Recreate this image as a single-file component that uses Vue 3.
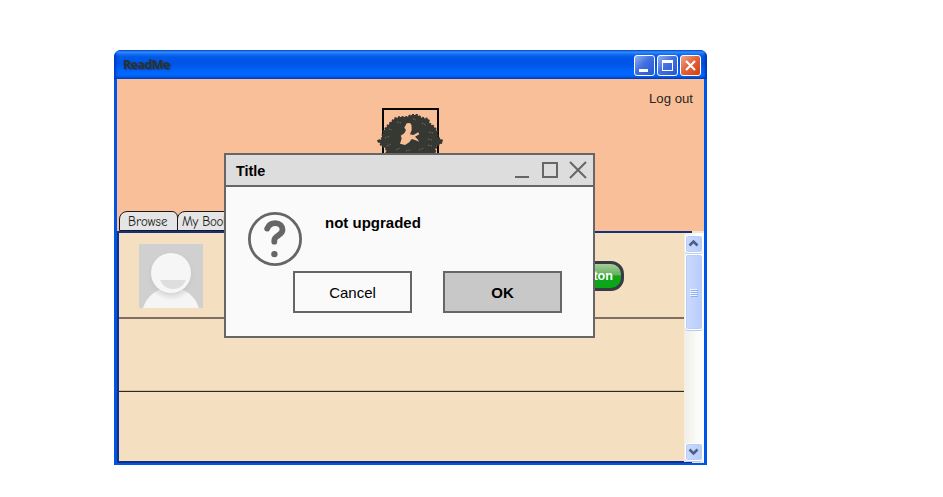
<script setup>
const captions = ['min', 'max', 'close']
const tabs = ['Browse', 'My Books']
</script>

<template>
  <main class="stage">
    <section class="window">
      <header class="titlebar">
        <h1>ReadMe</h1>
        <div class="captions">
          <button v-for="c in captions" :key="c" :class="['cap', c]">
            <svg viewBox="0 0 21 21" width="21" height="21">
              <rect v-if="c === 'min'" x="5" y="14" width="9" height="3" fill="#fff" />
              <path v-else-if="c === 'max'" d="M5 5h11v11H5zM6 8v7h9V8z" fill="#fff" fill-rule="evenodd" />
              <path v-else d="M6 6l9 9M15 6l-9 9" stroke="#fff" stroke-width="2.2" />
            </svg>
          </button>
        </div>
      </header>
      <div class="body">
        <div class="banner">
          <a class="logout">Log out</a>
          <svg class="logo" viewBox="0 0 68 52" width="68" height="52">
            <path d="M6 52V2h55v50" fill="none" stroke="#080808" stroke-width="2" />
            <path
              d="M1.3 34L4.7 32 6.3 24.7 9.7 19.7 13 16.3 18 11.3 23 10 29.7 10 34.7 8 40.3 8 44.7 10.7 51.3 12 52.3 16.3 57 19.7 60.3 24.7 60.3 29.7 65.7 34 63 37.3 59.7 38.7 58 43 59 47H9.7L9 41.3 4.7 38.7z"
              fill="#353833" stroke="#353833" stroke-width="2" stroke-dasharray="2 1.6" />
            <path
              d="M8 31l5-2m-1-7l3 1m5-8l4 1m12-4l3 1m6 3l4 2m3 7l4 1m-5 6l4 1M10 39l4-2m5 6l4-2m6 3l4-1m9 0l5-2m4-3l4 1"
              stroke="#8d745f" stroke-width=".9" fill="none" stroke-dasharray="1.4 1.2" />
            <path
              d="M29.7 16.3L33 16 34.5 18 34.7 23 33 27.3 36.3 28 41.3 25.3 42.3 27.3 38 29.7 40.3 32 42.3 34.7 38 33 34.7 32 32.3 35.3 28 38 23 36.8 24.7 31.3 23.7 28.7 27.3 26.3 29 23 27.3 20.7z"
              fill="#f8be98" />
          </svg>
          <nav class="tabs">
            <a v-for="t in tabs" :key="t" class="tab">{{ t }}</a>
          </nav>
        </div>
        <div class="content">
          <div class="list">
            <div class="row first">
              <svg class="avatar" viewBox="0 0 64 64" width="64" height="64">
                <defs>
                  <radialGradient id="glow" cx="50%" cy="50%" r="50%">
                    <stop offset=".7" stop-color="#b5b5b5" />
                    <stop offset="1" stop-color="#d0d0d0" stop-opacity="0" />
                  </radialGradient>
                  <clipPath id="torso"><path d="M4 64c4-12 13-20 28-20s24 8 28 20z" /></clipPath>
                </defs>
                <rect width="64" height="64" fill="#d0d0d0" />
                <circle cx="32" cy="31" r="26" fill="url(#glow)" opacity=".4" />
                <path d="M4 64c4-12 13-20 28-20s24 8 28 20z" fill="#f5f5f5" />
                <circle cx="32" cy="31" r="26" fill="url(#glow)" opacity=".5" clip-path="url(#torso)" />
                <circle cx="32" cy="29" r="20" fill="#f6f6f6" />
                <path d="M21 36h26c-3 6-7 9-13 9s-10-3-13-9z" fill="#dedede" />
              </svg>
              <button class="green">Button</button>
            </div>
            <div class="row second"></div>
            <div class="row third"></div>
          </div>
          <div class="scrollbar">
            <div class="arrow">
              <svg viewBox="0 0 17 17" width="17" height="17"><path d="M4.5 10.5l4-4 4 4" /></svg>
            </div>
            <div class="thumb"><i v-for="n in 4" :key="n"></i></div>
            <div class="arrow down">
              <svg viewBox="0 0 17 17" width="17" height="17"><path d="M4.5 6.5l4 4 4-4" /></svg>
            </div>
          </div>
        </div>
      </div>
    </section>

    <section class="dialog">
      <header>
        <h2>Title</h2>
        <svg viewBox="0 0 74 20" width="74" height="20" fill="none" stroke="#666" stroke-width="2">
          <path d="M1 17h14M29 3h14v14H29zM56 2l16 16M72 2L56 18" />
        </svg>
      </header>
      <div class="dialog-body">
        <svg class="question" viewBox="0 0 54 54" width="54" height="54">
          <circle cx="27" cy="27" r="25.6" fill="none" stroke="#666" stroke-width="2.8" />
          <path d="M19.2 16.6c1.6-3.8 4.6-5.4 8-5.4 4.6 0 7.3 2.8 7.3 6.6 0 6-8.2 5.2-8.2 10.6v1.3" fill="none" stroke="#666" stroke-width="5.8" stroke-linecap="round" />
          <circle cx="26.4" cy="42.1" r="3.2" fill="#666" />
        </svg>
        <p>not upgraded</p>
        <div class="actions">
          <button>Cancel</button>
          <button class="ok">OK</button>
        </div>
      </div>
    </section>
  </main>
</template>

<style>
body { background: #fff; }
</style>

<style scoped>
* { box-sizing: border-box; }
h1, h2, p { margin: 0; }
button { padding: 0; margin: 0; font: inherit; }
svg { display: block; flex: none; }
.stage {
  position: relative;
  width: 943px;
  height: 497px;
  padding: 50px 0 0 114px;
  overflow: hidden;
  font-family: "Liberation Sans", Arial, sans-serif;
}
.window {
  width: 593px;
  height: 415px;
  display: flex;
  flex-direction: column;
  background: #0054e6;
  border-radius: 7px 7px 0 0;
  overflow: hidden;
}
.titlebar {
  height: 29px;
  flex: none;
  display: flex;
  align-items: center;
  justify-content: space-between;
  padding: 1px 6px 0 9px;
  background: linear-gradient(#0b50d0 0, #3190ff 2px, #1470f5 4px, #0058e6 7px, #0054e3 14px, #0062fa 20px, #006aff 25px, #0058e8 27px, #0040c0 29px);
  box-shadow: inset 3px 0 3px -1px #0038c4, inset -3px 0 3px -1px #0030b0;
}
.titlebar h1 {
  font: bold 12.5px/20px "Open Sans", sans-serif;
  letter-spacing: -.6px;
  color: #27322f;
  text-shadow: 1px 1px 1px #163c94;
}
.captions { display: flex; gap: 2px; }
.cap {
  width: 21px;
  height: 21px;
  border: 1px solid #fff;
  border-radius: 3px;
  background: linear-gradient(135deg, #91aff5, #4370df 45%, #2458d5);
}
.cap svg { margin: -1px; }
.cap.close { background: linear-gradient(135deg, #f0a58e, #e1653f 45%, #d93d0b); }
.body {
  height: 384px;
  margin: 0 3px;
  display: flex;
  flex-direction: column;
  background: #f4dfc1;
}
.banner {
  height: 152px;
  display: flex;
  flex-direction: column;
  background: #f9bf99;
}
.logout {
  align-self: flex-end;
  margin: 12px 11px 0 0;
  font-size: 13.2px;
  line-height: 16px;
  height: 16px;
  color: #292421;
}
.logo { margin: 0 0 0 260px; }
.tabs { display: flex; margin: 52px 0 0 2px; height: 20px; }
.tab {
  width: 59px;
  padding-left: 8px;
  border: 1.5px solid #191919;
  border-radius: 8px 6px 0 0;
  background: #e5e5e5;
  font: 13px/20px "Comic Neue", "Comic Sans MS", "Noto Sans", sans-serif;
  color: #1d1d1d;
  white-space: nowrap;
}
.tab + .tab { width: 72px; margin-left: -1px; padding-left: 4px; letter-spacing: -.3px; }
.content {
  height: 232px;
  display: flex;
  background: linear-gradient(#14307f, #14307f) 0 0 / 573px 2px no-repeat,
    linear-gradient(#14307f, #14307f) 571px 0 / 2px 3px no-repeat,
    linear-gradient(#14307f, #14307f) 0 100% / 573px 2px no-repeat, #ece9d8;
  border-left: 2px solid #14307f;
}
.list { width: 565px; margin: 2px 0; background: #f4dfc1; }
.row { height: 73px; }
.first {
  height: 86px;
  display: flex;
  align-items: flex-start;
  justify-content: space-between;
  padding: 11px 60px 0 20px;
  border-bottom: 2px solid #7e6f62;
}
.second { border-bottom: 1px solid #2d2922; box-shadow: 0 -1px #d4c2a8 inset; }
.green {
  width: 100px;
  height: 30px;
  margin-top: 17px;
  padding: 0 8px 1px 0;
  text-align: right;
  border: 3px solid #383b43;
  border-radius: 13px;
  background: linear-gradient(#a4cc9b 0, #65b160 45%, #10a51a 50%, #08a618 100%);
  color: #fff;
  font-size: 12.6px;
  font-weight: bold;
}
.scrollbar {
  width: 20px;
  margin: 2px 0 1px;
  padding: 2px 1px 0;
  display: flex;
  flex-direction: column;
  background: linear-gradient(90deg, #f0eee4, #fafaf6 60%, #fff);
}
.arrow, .thumb {
  width: 18px;
  border: 1px solid #fff;
  border-radius: 3px;
  background: linear-gradient(90deg, #cbdafe, #b8cdfb);
  box-shadow: inset 0 0 0 1px #bccdf5, 0 1px #b7cbea;
}
.arrow { height: 18px; }
.arrow.down { margin-top: auto; margin-bottom: 1px; }
.arrow path { fill: none; stroke: #4d6185; stroke-width: 2.5; }
.arrow svg { margin: -1px; }
.thumb {
  height: 76px;
  margin-top: 1px;
  padding-right: 2px;
  display: flex;
  flex-direction: column;
  align-items: center;
  justify-content: center;
  gap: 1px;
}
.thumb i { width: 7px; height: 1px; background: #f2f6ff; box-shadow: 1px 1px #8cb0f8; }
.dialog {
  position: absolute;
  left: 224px;
  top: 153px;
  width: 371px;
  height: 185px;
  border: 2px solid #666;
  background: #fafafa;
  color: #000;
}
.dialog header {
  height: 32px;
  display: flex;
  align-items: center;
  justify-content: space-between;
  padding: 0 5px 0 10px;
  border-bottom: 2px solid #666;
  background: #ddd;
}
.dialog h2 { font-size: 14.4px; line-height: 20px; padding-top: 2px; }
.dialog-body {
  display: grid;
  grid-template-columns: 54px 1fr;
  grid-template-rows: 59px 42px;
  column-gap: 23px;
  padding: 25px 31px 0 22px;
}
.dialog p { font-size: 15px; line-height: 20px; font-weight: bold; padding-top: 1px; }
.actions { grid-column: 1 / -1; display: flex; justify-content: flex-end; gap: 31px; }
.actions button {
  width: 119px;
  height: 42px;
  border: 2px solid #666;
  background: #fafafa;
  color: #000;
  font-size: 15px;
  padding-top: 1px;
}
.actions .ok { background: #c8c8c8; font-weight: bold; }
</style>
